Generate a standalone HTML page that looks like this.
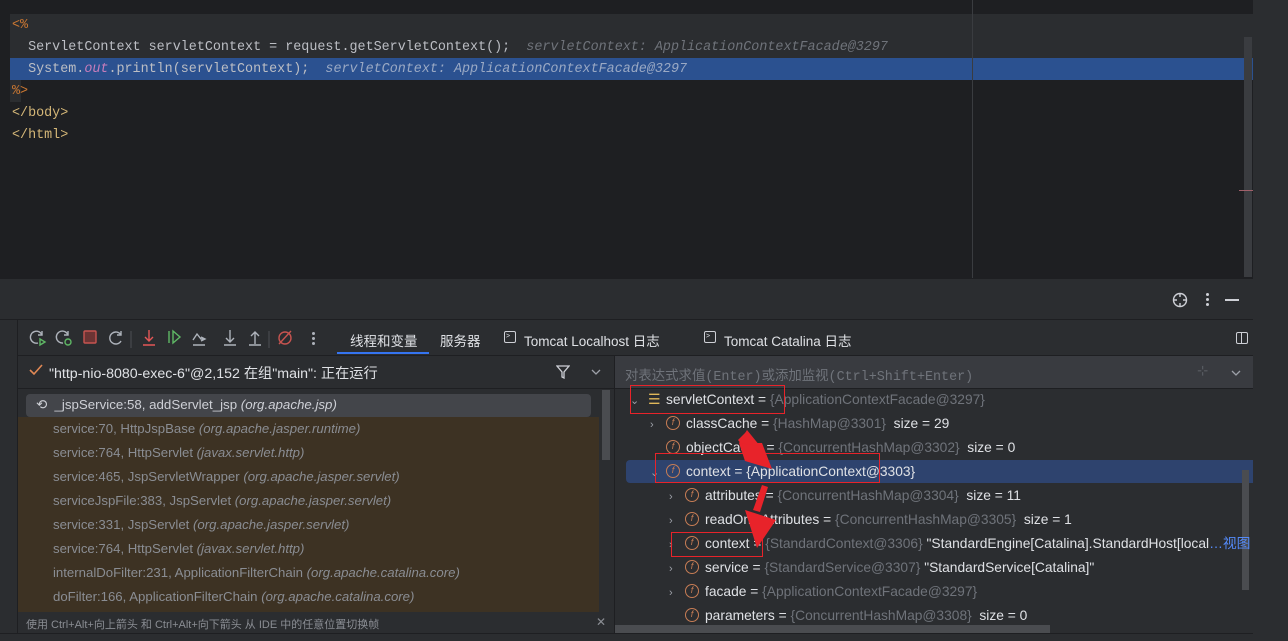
<!DOCTYPE html>
<html><head><meta charset="utf-8"><style>
*{margin:0;padding:0;box-sizing:border-box}
body{width:1288px;height:641px;background:#2b2d30;position:relative;overflow:hidden;font-family:"Liberation Sans","Noto Sans CJK SC",sans-serif;font-size:13.5px;color:#dfe1e5}
.abs{position:absolute}
.code{font-family:"Liberation Mono","DejaVu Sans Mono",monospace;font-size:13.4px;white-space:pre}
.hint{color:#6f737a;font-style:italic}
.row{position:absolute;height:24px;line-height:24px;white-space:nowrap;font-size:13.8px}
.fr{color:#8a8d93}.fr i{color:#8a8d93}
.v{color:#dfe1e5}.g{color:#6f737a}
.fi{display:inline-block;width:14px;height:14px;border-radius:50%;border:1.5px solid #c77d55;color:#c77d55;font-size:9px;line-height:11px;text-align:center;font-style:italic;vertical-align:middle;margin-top:-3px;margin-right:6px}
.ch{display:inline-block;width:16px;color:#9da0a8;font-size:11px}
</style></head><body>
<!-- editor -->
<div class="abs" style="left:0;top:0;width:1253px;height:278px;background:#1e1f22"></div>
<div class="abs" style="left:10px;top:14px;width:1243px;height:44px;background:#2b2d30"></div>
<div class="abs" style="left:10px;top:58px;width:1243px;height:22px;background:#2b5190"></div>
<div class="abs" style="left:10px;top:80px;width:11px;height:22px;background:#2b2d30"></div>
<div class="abs" style="left:972px;top:0;width:1px;height:278px;background:#3a3c40"></div>
<div class="abs" style="left:1244px;top:37px;width:8px;height:240px;background:#3a3c40"></div>
<div class="abs" style="left:1239px;top:190px;width:14px;height:1px;background:#a0606a"></div>
<div class="abs" style="left:1253px;top:0;width:35px;height:641px;background:#2b2d30"></div>
<div class="abs code" style="left:12px;top:15px;line-height:22px;color:#bcbec4"><span style="color:#cc7832">&lt;%</span>
  ServletContext servletContext = request.getServletContext();  <span class="hint">servletContext: ApplicationContextFacade@3297</span>
  System.<span style="color:#c77dbb;font-style:italic">out</span>.println(servletContext);  <span class="hint" style="color:#9aa9c4">servletContext: ApplicationContextFacade@3297</span>
<span style="color:#cc7832">%&gt;</span>
<span style="color:#d5b778">&lt;/body&gt;</span>
<span style="color:#d5b778">&lt;/html&gt;</span></div>
<!-- tool header -->
<div class="abs" style="left:0;top:278px;width:1253px;height:1px;background:#1e1f22"></div>
<svg class="abs" style="left:1171px;top:291px" width="18" height="18" viewBox="0 0 18 18" fill="none" stroke="#ced0d6" stroke-width="1.4"><circle cx="9" cy="9" r="6.5"/><path d="M9 2v4M9 12v4M2 9h4M12 9h4"/></svg>
<div class="abs" style="left:1206px;top:293px;width:3px;height:3px;background:#ced0d6;border-radius:50%;box-shadow:0 5px 0 #ced0d6,0 10px 0 #ced0d6"></div>
<div class="abs" style="left:1225px;top:299px;width:14px;height:1.5px;background:#ced0d6"></div>
<div class="abs" style="left:0;top:319px;width:1253px;height:1px;background:#1e1f22"></div>
<div class="abs" style="left:17px;top:320px;width:1px;height:321px;background:#1e1f22"></div>
<!-- toolbar -->
<svg class="abs" style="left:28px;top:328px" width="300" height="20" viewBox="0 0 300 20" fill="none" stroke-width="1.4">
<g stroke="#aeb3bb"><path d="M14 7 A6 6 0 1 0 10 15"/><path d="M14 3v4h-4"/></g><path d="M12 11l5 3-5 3z" stroke="#5fb865"/>
<g transform="translate(26,0)"><g stroke="#aeb3bb"><path d="M14 7 A6 6 0 1 0 9 15"/><path d="M14 3v4h-4"/></g><circle cx="14" cy="14" r="3" stroke="#5fb865"/></g>
<rect x="56" y="3" width="12" height="12" rx="1" fill="#6b3434" stroke="#c75450"/>
<g transform="translate(80,0)" stroke="#aeb3bb"><path d="M13 7 A6 6 0 1 0 13 13"/><path d="M13 3v4h-4"/></g>
<path d="M103 3v18" stroke="#43454a"/>
<g stroke="#e55757"><path d="M121 2v11M117 9l4 4 4-4M115 17h12"/></g>
<g stroke="#5fb865"><path d="M141 3v12"/><path d="M145 3l7 6-7 6z"/></g>
<g stroke="#aeb3bb"><path d="M165 12l4-6 4 5h4M173 9l4 2-4 2M165 17h12"/><path d="M202 2v12M198 10l4 4 4-4M196 17h12"/><path d="M227 4v12M223 8l4-4 4 4M221 17h12"/></g>
<path d="M241 3v18" stroke="#43454a"/>
<g stroke="#c75450"><circle cx="257" cy="10" r="6"/><path d="M251 16l12-13"/></g>
</svg>
<div class="abs" style="left:312px;top:332px;width:3px;height:3px;background:#aeb3bb;border-radius:50%;box-shadow:0 5px 0 #aeb3bb,0 10px 0 #aeb3bb"></div>
<div class="abs" style="left:350px;top:330px">线程和变量</div>
<div class="abs" style="left:337px;top:352px;width:92px;height:2px;background:#3574f0"></div>
<div class="abs" style="left:440px;top:330px">服务器</div>
<div class="abs" style="left:504px;top:331px;width:12px;height:12px;border:1.3px solid #ced0d6;border-radius:2px;font-size:7px;line-height:9px;padding-left:1px">&gt;</div>
<div class="abs" style="left:524px;top:330px">Tomcat Localhost 日志</div>
<div class="abs" style="left:704px;top:331px;width:12px;height:12px;border:1.3px solid #ced0d6;border-radius:2px;font-size:7px;line-height:9px;padding-left:1px">&gt;</div>
<div class="abs" style="left:724px;top:330px">Tomcat Catalina 日志</div>
<div class="abs" style="left:1236px;top:332px;width:12px;height:12px;border:1.3px solid #ced0d6;border-radius:2px"></div>
<div class="abs" style="left:1241px;top:332px;width:1.3px;height:12px;background:#ced0d6"></div>
<div class="abs" style="left:17px;top:355px;width:1236px;height:1px;background:#1e1f22"></div>
<!-- left pane -->
<svg class="abs" style="left:29px;top:364px" width="14" height="12"><path d="M1 6l4 4 8-9" stroke="#e08855" stroke-width="1.6" fill="none"/></svg>
<div class="abs" style="left:49px;top:363px;font-size:14.2px">"http-nio-8080-exec-6"@2,152 在组"main": 正在运行</div>
<svg class="abs" style="left:556px;top:365px" width="14" height="14"><path d="M1 1h12L8 7v6L6 12V7z" stroke="#ced0d6" stroke-width="1.3" fill="none"/></svg>
<svg class="abs" style="left:591px;top:369px" width="10" height="6"><path d="M1 1l4 4 4-4" stroke="#9da0a8" stroke-width="1.3" fill="none"/></svg>
<div class="abs" style="left:17px;top:388px;width:597px;height:1px;background:#1e1f22"></div>
<div class="abs" style="left:614px;top:355px;width:1px;height:286px;background:#1e1f22"></div>
<div class="abs" style="left:18px;top:417px;width:581px;height:195px;background:#3d3223"></div>
<div class="abs" style="left:602px;top:390px;width:8px;height:70px;background:#4a4c50"></div>
<div class="abs" style="left:26px;top:394px;width:565px;height:23px;background:#43454a;border-radius:4px"></div>
<div class="abs" style="left:36px;top:397px;color:#ced0d6;font-size:13.3px">⟲ &nbsp;_jspService:58, addServlet_jsp <i>(org.apache.jsp)</i></div>
<div class="abs fr" style="left:53px;top:0;line-height:24px;font-size:13.2px">
<div style="position:absolute;top:417px;white-space:nowrap">service:70, HttpJspBase <i>(org.apache.jasper.runtime)</i></div>
<div style="position:absolute;top:441px;white-space:nowrap">service:764, HttpServlet <i>(javax.servlet.http)</i></div>
<div style="position:absolute;top:465px;white-space:nowrap">service:465, JspServletWrapper <i>(org.apache.jasper.servlet)</i></div>
<div style="position:absolute;top:489px;white-space:nowrap">serviceJspFile:383, JspServlet <i>(org.apache.jasper.servlet)</i></div>
<div style="position:absolute;top:513px;white-space:nowrap">service:331, JspServlet <i>(org.apache.jasper.servlet)</i></div>
<div style="position:absolute;top:537px;white-space:nowrap">service:764, HttpServlet <i>(javax.servlet.http)</i></div>
<div style="position:absolute;top:561px;white-space:nowrap">internalDoFilter:231, ApplicationFilterChain <i>(org.apache.catalina.core)</i></div>
<div style="position:absolute;top:585px;white-space:nowrap">doFilter:166, ApplicationFilterChain <i>(org.apache.catalina.core)</i></div>
</div>
<div class="abs" style="left:26px;top:616px;font-size:11px;color:#8a8d93">使用 Ctrl+Alt+向上箭头 和 Ctrl+Alt+向下箭头 从 IDE 中的任意位置切换帧</div>
<div class="abs" style="left:596px;top:615px;font-size:12px;color:#8a8d93">✕</div>
<div class="abs" style="left:0;top:633px;width:1253px;height:8px;background:#2b2d30;border-top:1px solid #1e1f22"></div>
<!-- right pane -->
<div class="abs" style="left:615px;top:356px;width:638px;height:32px;background:#393b40"></div>
<div class="abs code" style="left:625px;top:364px;color:#6f737a;font-size:13.4px">对表达式求值(Enter)或添加监视(Ctrl+Shift+Enter)</div>
<div class="abs" style="left:1197px;top:363px;color:#5a5d63">⊹</div>
<svg class="abs" style="left:1231px;top:370px" width="10" height="6"><path d="M1 1l4 4 4-4" stroke="#9da0a8" stroke-width="1.3" fill="none"/></svg>
<div class="abs" style="left:615px;top:388px;width:638px;height:1px;background:#1e1f22"></div>
<div class="abs" style="left:626px;top:460px;width:627px;height:23px;background:#2e436e;border-radius:4px 0 0 4px"></div>
<div class="abs" style="left:1242px;top:470px;width:7px;height:120px;background:#4a4c50"></div>
<div class="abs" style="left:615px;top:625px;width:435px;height:8px;background:#4a4c50"></div>
<div class="row" style="left:630px;top:388px"><span class="ch" style="width:18px">⌄</span><span style="color:#e0b85a;margin-right:6px;display:inline-block;width:12px">☰</span><span class="v">servletContext = </span><span class="g">{ApplicationContextFacade@3297}</span></div>
<div class="row" style="left:650px;top:412px"><span class="ch">›</span><span class="fi">f</span><span class="v">classCache = </span><span class="g">{HashMap@3301}</span><span class="v"> &nbsp;size = 29</span></div>
<div class="row" style="left:650px;top:436px"><span class="ch"></span><span class="fi">f</span><span class="v">objectCache = </span><span class="g">{ConcurrentHashMap@3302}</span><span class="v"> &nbsp;size = 0</span></div>
<div class="row" style="left:650px;top:460px"><span class="ch">⌄</span><span class="fi">f</span><span class="v">context = {ApplicationContext@3303}</span></div>
<div class="row" style="left:669px;top:484px"><span class="ch">›</span><span class="fi">f</span><span class="v">attributes = </span><span class="g">{ConcurrentHashMap@3304}</span><span class="v"> &nbsp;size = 11</span></div>
<div class="row" style="left:669px;top:508px"><span class="ch">›</span><span class="fi">f</span><span class="v">readOnlyAttributes = </span><span class="g">{ConcurrentHashMap@3305}</span><span class="v"> &nbsp;size = 1</span></div>
<div class="row" style="left:669px;top:532px"><span class="ch">›</span><span class="fi">f</span><span class="v">context = </span><span class="g">{StandardContext@3306}</span><span class="v"> "StandardEngine[Catalina].StandardHost[local</span><span style="color:#548af7">…视图</span></div>
<div class="row" style="left:669px;top:556px"><span class="ch">›</span><span class="fi">f</span><span class="v">service = </span><span class="g">{StandardService@3307}</span><span class="v"> "StandardService[Catalina]"</span></div>
<div class="row" style="left:669px;top:580px"><span class="ch">›</span><span class="fi">f</span><span class="v">facade = </span><span class="g">{ApplicationContextFacade@3297}</span></div>
<div class="row" style="left:669px;top:604px"><span class="ch"></span><span class="fi">f</span><span class="v">parameters = </span><span class="g">{ConcurrentHashMap@3308}</span><span class="v"> &nbsp;size = 0</span></div>
<!-- red annotation boxes & arrows -->
<div class="abs" style="left:630px;top:385px;width:155px;height:29px;border:1.5px solid #e8232a"></div>
<div class="abs" style="left:655px;top:453px;width:225px;height:30px;border:1.5px solid #e8232a"></div>
<div class="abs" style="left:671px;top:532px;width:92px;height:25px;border:1.5px solid #e8232a"></div>
<svg class="abs" style="left:0;top:0" width="1288" height="641">
<path d="M738 440 L746 432 L758 448 L750 455 Z" fill="#e8232a"/>
<path d="M739 443 L762 443 L772 469 L745 461 Z" fill="#e8232a"/>
<path d="M739 443 L747 430 L760 446 Z" fill="#e8232a"/>
<path d="M762 485 L768 487 L760 512 L753 510 Z" fill="#e8232a"/>
<path d="M745 510 L776 520 L757 548 Z" fill="#e8232a"/>
</svg>
</body></html>
